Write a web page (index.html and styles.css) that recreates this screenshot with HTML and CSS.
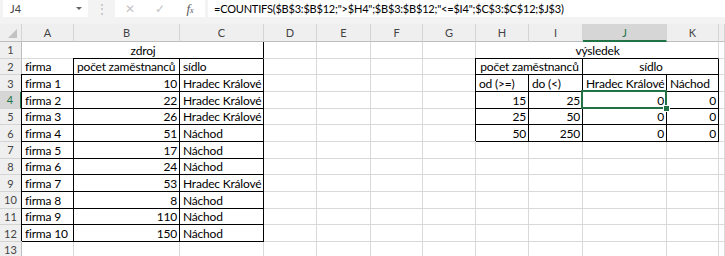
FILE: index.html
```html
<!DOCTYPE html>
<html>
<head>
<meta charset="utf-8">
<title>COUNTIFS</title>
<link rel="stylesheet" href="styles.css">
</head>
<body>
<div class="bar">
	<div class="namebox">J4<span class="drop"></span></div>
	<div class="dots">⋮</div>
	<div class="btns"><span class="x">✕</span><span class="ok">✓</span><span class="fx">f<sub>x</sub></span></div>
	<div class="formula">=COUNTIFS($B$3:$B$12;"&gt;$H4";$B$3:$B$12;"&lt;=$I4";$C$3:$C$12;$J$3)</div>
</div>
<div class="sheet">
	<!-- column headers -->
	<div class="ch corner"><span class="tri"></span></div>
	<div class="ch">A</div><div class="ch">B</div><div class="ch">C</div><div class="ch">D</div><div class="ch">E</div><div class="ch">F</div>
	<div class="ch">G</div><div class="ch">H</div><div class="ch">I</div><div class="ch sel">J</div><div class="ch">K</div><div class="ch"></div>

	<!-- 1 -->
	<div class="rh">1</div>
	<div class="c m3 mid br">zdroj</div><div class="c"></div><div class="c"></div><div class="c"></div>
	<div class="c"></div><div class="c m4 mid bb">výsledek</div><div class="c"></div>
	<!-- 2 -->
	<div class="rh">2</div>
	<div class="c bb">firma</div><div class="c bx">počet zaměstnanců</div><div class="c bx">sídlo</div>
	<div class="c"></div><div class="c"></div><div class="c"></div><div class="c"></div>
	<div class="c m2 mid bx">počet zaměstnanců</div><div class="c m2 mid bx">sídlo</div><div class="c"></div>
	<!-- 3 -->
	<div class="rh">3</div>
	<div class="c bx">firma 1</div><div class="c bx num">10</div><div class="c bx">Hradec Králové</div>
	<div class="c"></div><div class="c"></div><div class="c"></div><div class="c"></div>
	<div class="c bx">od (&gt;=)</div><div class="c bx">do (&lt;)</div><div class="c bx">Hradec Králové</div><div class="c bx">Náchod</div><div class="c"></div>
	<!-- 4 -->
	<div class="rh sel">4</div>
	<div class="c bx">firma 2</div><div class="c bx num">22</div><div class="c bx">Hradec Králové</div>
	<div class="c"></div><div class="c"></div><div class="c"></div><div class="c"></div>
	<div class="c bx num">15</div><div class="c bx num">25</div><div class="c bx num active">0</div><div class="c bx num">0</div><div class="c"></div>
	<!-- 5 -->
	<div class="rh">5</div>
	<div class="c bx">firma 3</div><div class="c bx num">26</div><div class="c bx">Hradec Králové</div>
	<div class="c"></div><div class="c"></div><div class="c"></div><div class="c"></div>
	<div class="c bx num">25</div><div class="c bx num">50</div><div class="c bx num">0</div><div class="c bx num">0</div><div class="c"></div>
	<!-- 6 -->
	<div class="rh">6</div>
	<div class="c bx">firma 4</div><div class="c bx num">51</div><div class="c bx">Náchod</div>
	<div class="c"></div><div class="c"></div><div class="c"></div><div class="c"></div>
	<div class="c bx num">50</div><div class="c bx num">250</div><div class="c bx num">0</div><div class="c bx num">0</div><div class="c"></div>
	<!-- 7 -->
	<div class="rh">7</div>
	<div class="c bx">firma 5</div><div class="c bx num">17</div><div class="c bx">Náchod</div>
	<div class="c"></div><div class="c"></div><div class="c"></div><div class="c"></div><div class="c"></div><div class="c"></div><div class="c"></div><div class="c"></div><div class="c"></div>
	<!-- 8 -->
	<div class="rh">8</div>
	<div class="c bx">firma 6</div><div class="c bx num">24</div><div class="c bx">Náchod</div>
	<div class="c"></div><div class="c"></div><div class="c"></div><div class="c"></div><div class="c"></div><div class="c"></div><div class="c"></div><div class="c"></div><div class="c"></div>
	<!-- 9 -->
	<div class="rh">9</div>
	<div class="c bx">firma 7</div><div class="c bx num">53</div><div class="c bx">Hradec Králové</div>
	<div class="c"></div><div class="c"></div><div class="c"></div><div class="c"></div><div class="c"></div><div class="c"></div><div class="c"></div><div class="c"></div><div class="c"></div>
	<!-- 10 -->
	<div class="rh">10</div>
	<div class="c bx">firma 8</div><div class="c bx num">8</div><div class="c bx">Náchod</div>
	<div class="c"></div><div class="c"></div><div class="c"></div><div class="c"></div><div class="c"></div><div class="c"></div><div class="c"></div><div class="c"></div><div class="c"></div>
	<!-- 11 -->
	<div class="rh">11</div>
	<div class="c bx">firma 9</div><div class="c bx num">110</div><div class="c bx">Náchod</div>
	<div class="c"></div><div class="c"></div><div class="c"></div><div class="c"></div><div class="c"></div><div class="c"></div><div class="c"></div><div class="c"></div><div class="c"></div>
	<!-- 12 -->
	<div class="rh">12</div>
	<div class="c bx">firma 10</div><div class="c bx num">150</div><div class="c bx">Náchod</div>
	<div class="c"></div><div class="c"></div><div class="c"></div><div class="c"></div><div class="c"></div><div class="c"></div><div class="c"></div><div class="c"></div><div class="c"></div>
	<!-- 13 -->
	<div class="rh">13</div>
	<div class="c"></div><div class="c"></div><div class="c"></div>
	<div class="c"></div><div class="c"></div><div class="c"></div><div class="c"></div><div class="c"></div><div class="c"></div><div class="c"></div><div class="c"></div><div class="c"></div>
</div>
</body>
</html>
```

FILE: styles.css
```css
html, body { margin: 0; padding: 0; }
body {
	width: 725px;
	height: 256px;
	overflow: hidden;
	background: #fff;
	font-family: Lato, "Liberation Sans", sans-serif;
	font-size: 12px;
	color: #000;
}

/* formula bar */
.bar {
	display: flex;
	align-items: flex-start;
	height: 24px;
	background: #f3f3f3;
}
.namebox {
	display: flex;
	align-items: center;
	justify-content: space-between;
	box-sizing: border-box;
	margin-left: 3px;
	width: 85px;
	height: 17px;
	padding: 0 6px 0 7px;
	background: #fff;
	color: #444;
	font-size: 11px;
}
.drop {
	width: 0;
	height: 0;
	border-left: 3px solid transparent;
	border-right: 3px solid transparent;
	border-top: 3px solid #666;
}
.dots {
	width: 27px;
	height: 17px;
	line-height: 17px;
	text-align: center;
	color: #bbb;
	font-size: 12px;
}
.btns {
	display: flex;
	align-items: center;
	width: 90px;
	height: 17px;
	background: #fff;
	color: #c4c4c4;
}
.btns span { width: 30px; text-align: center; font-size: 12px; }
.btns .fx { color: #555; font-family: "Liberation Serif", serif; font-style: italic; font-size: 13px; }
.btns .fx sub { font-size: 8px; vertical-align: 0; }
.formula {
	flex: 1;
	box-sizing: border-box;
	margin-left: 3px;
	height: 17px;
	line-height: 17px;
	padding-left: 6px;
	background: #fff;
	font-size: 11px;
	letter-spacing: -0.2px;
	white-space: nowrap;
	overflow: hidden;
}

/* sheet */
.sheet {
	display: grid;
	grid-template-columns: 22px 52px 106px 84px 53px 54px 52px 53px 53px 54px 84px 52px 1fr;
	grid-template-rows: 18px repeat(13, 16.67px);
}
.ch, .rh, .c {
	box-sizing: border-box;
	display: flex;
	white-space: nowrap;
}
.ch {
	align-items: center;
	justify-content: center;
	background: #efefef;
	border-right: 1px solid #d4d4d4;
	border-bottom: 1px solid #bdbdbd;
	color: #444;
	font-size: 11px;
}
.ch.sel { background: #d6d6d6; border-bottom: 2px solid #217346; color: #217346; }
.corner { justify-content: flex-end; align-items: flex-end; padding: 0 4px 3px 0; }
.tri {
	width: 0;
	height: 0;
	border-left: 9px solid transparent;
	border-bottom: 9px solid #c2c2c2;
}
.rh {
	align-items: center;
	justify-content: center;
	background: #efefef;
	border-right: 1px solid #bdbdbd;
	border-bottom: 1px solid #d4d4d4;
	color: #444;
	font-size: 11px;
}
.rh.sel { background: #d6d6d6; border-right: 2px solid #217346; color: #217346; }
.c {
	align-items: flex-end;
	padding: 0 2px 0 3px;
	border-right: 1px solid #d9d9d9;
	border-bottom: 1px solid #d9d9d9;
	line-height: 15px;
	letter-spacing: -0.2px;
}
.num { justify-content: flex-end; }
.mid { justify-content: center; }
.m2 { grid-column: span 2; }
.m3 { grid-column: span 3; }
.m4 { grid-column: span 4; }

/* cell borders */
.br { border-right-color: #000; }
.bb { border-bottom-color: #000; }
.bx {
	border-right-color: #000;
	border-bottom-color: #000;
	box-shadow: -1px -1px 0 0 #000;
}

/* selected cell */
.active { position: relative; }
.active::after {
	content: "";
	position: absolute;
	left: -2px;
	top: -2px;
	right: -1px;
	bottom: -1px;
	border: 2px solid #217346;
}
.active::before {
	content: "";
	position: absolute;
	right: -4px;
	bottom: -4px;
	width: 5px;
	height: 5px;
	background: #217346;
	border: 1px solid #fff;
	z-index: 1;
}
```
